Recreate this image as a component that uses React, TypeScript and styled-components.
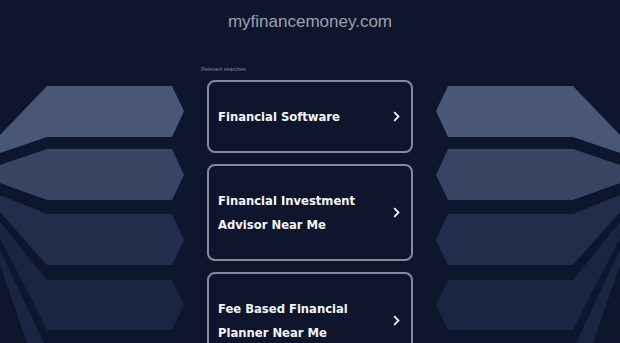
import React from 'react';
import styled, { createGlobalStyle } from 'styled-components';

const GlobalStyle = createGlobalStyle`
    html, body {
        margin: 0;
        padding: 0;
        background: #0e162e;
        overflow: hidden;
    }
`;

const Page = styled.div`
    position: relative;
    width: 100%;
    height: 100vh;
    overflow: hidden;
    background: #0e162e;
`;

const Backdrop = styled.svg`
    position: absolute;
    left: 0;
    top: 0;
    width: 620px;
    height: 343px;
    z-index: 0;
`;

const Content = styled.main`
    position: relative;
    z-index: 1;
`;

const Domain = styled.h1`
    margin: 0;
    height: 44px;
    line-height: 44px;
    text-align: center;
    font-family: "Liberation Sans", Arial, sans-serif;
    font-size: 17px;
    font-weight: 400;
    color: #9da2ad;
`;

const Column = styled.section`
    width: 218px;
    margin: 0 auto;
`;

const Label = styled.div`
    margin-top: 20px;
    height: 16px;
    line-height: 10px;
    font-family: "Liberation Sans", Arial, sans-serif;
    font-size: 5.4px;
    color: #7e8493;
`;

const List = styled.ul`
    list-style: none;
    margin: 0;
    padding: 0 6px;
    display: flex;
    flex-direction: column;
    gap: 11px;
`;

const Card = styled.li`
    display: flex;
    align-items: center;
    justify-content: space-between;
    padding: 22.5px 11px 22.5px 9px;
    border: 2px solid #858a97;
    border-radius: 8px;
    background: #0e162e;
`;

const Title = styled.span`
    max-width: 165px;
    font-family: "DejaVu Sans", Verdana, sans-serif;
    font-weight: 700;
    font-size: 11.6px;
    line-height: 24px;
    color: #f4f5f7;
`;

const Chevron = styled.svg`
    width: 7px;
    height: 11px;
    flex: none;
`;

const searches = [
    'Financial Software',
    'Financial Investment Advisor Near Me',
    'Fee Based Financial Planner Near Me',
];

// one half of the fan, mirrored for the right side
const fan = [
    { fill: '#4a5676', points: '0,135 47,86 172,86 184,111 172,137 47,137 0,153' },
    { fill: '#394462', points: '0,165 47,149 172,149 184,175 172,200 47,200 0,183' },
    { fill: '#232d4b', points: '0,195 47,214 172,214 184,240 172,265 47,265 0,212' },
    { fill: '#1b2441', points: '0,222 47,280 172,280 184,305 172,330 47,330 0,238' },
    { fill: '#1b2441', points: '0,250 44,343 27,343 0,265' },
];

const App = () => {
    return (
        <Page>
            <GlobalStyle />
            <Backdrop viewBox="0 0 620 343">
                <g>
                    {fan.map((s, i) => <polygon key={i} points={s.points} fill={s.fill} />)}
                </g>
                <g transform="translate(620,0) scale(-1,1)">
                    {fan.map((s, i) => <polygon key={i} points={s.points} fill={s.fill} />)}
                </g>
            </Backdrop>
            <Content>
                <Domain>myfinancemoney.com</Domain>
                <Column>
                    <Label>Relevant searches</Label>
                    <List>
                        {searches.map((text) => (
                            <Card key={text}>
                                <Title>{text}</Title>
                                <Chevron viewBox="0 0 7 11">
                                    <path d="M1.2 1.2 L5.5 5.5 L1.2 9.8" fill="none" stroke="#f4f5f7" strokeWidth="1.8" />
                                </Chevron>
                            </Card>
                        ))}
                    </List>
                </Column>
            </Content>
        </Page>
    );
};

export default App;
